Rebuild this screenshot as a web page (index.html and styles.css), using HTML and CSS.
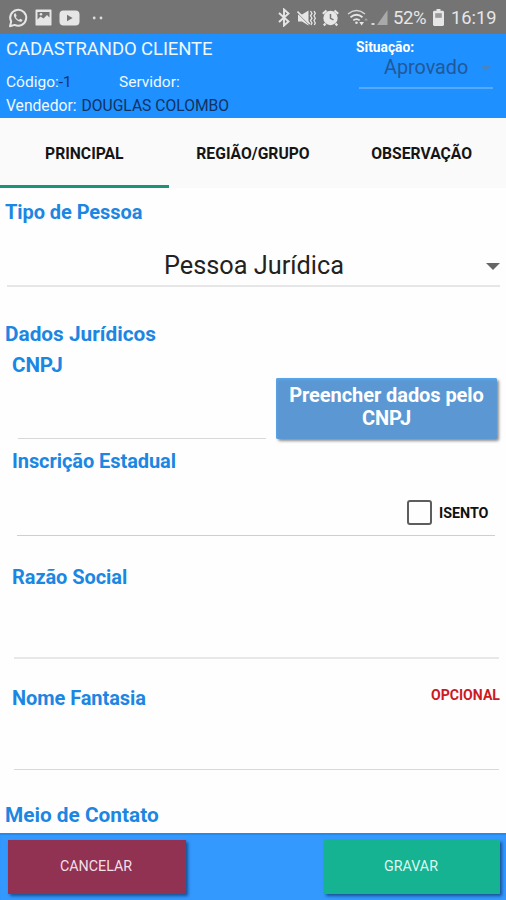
FILE: index.html
```html
<!DOCTYPE html>
<html lang="pt-BR">
<head>
<meta charset="UTF-8" />
<meta name="viewport" content="width=device-width, initial-scale=1" />
<title>Cadastrando Cliente</title>
<link rel="stylesheet" href="styles.css">
</head>
<body>
<div class="status-bar">
  <svg class="icon-whatsapp" width="20" height="20" viewBox="0 0 20 20">
    <path d="M2 18.2 L3.2 13.6 A8 8 0 1 1 6.6 16.9 Z" fill="none" stroke="#e6e6e6" stroke-width="2" stroke-linejoin="round"/>
    <path d="M7 5.2 C5.2 6 5.6 8.6 8.2 11.4 C11 14 13.8 14.4 14.4 12.4 L14.3 11.8 L12.1 10.7 L11 11.9 C9.6 11.4 8.4 10.2 7.8 8.9 L8.7 7.9 L7.8 5.4 Z" fill="#e6e6e6"/>
  </svg>
  <svg class="icon-image" width="17" height="17" viewBox="0 0 17 17">
    <path fill="#e6e6e6" fill-rule="evenodd" d="M1 0.5 H16 L16.5 1 V16 L16 16.5 H1 L.5 16 V1 Z M2.5 3 V10.5 L5.5 7.5 L8.5 9.5 L12 6 L14.5 8.5 V3 Z"/>
    <circle cx="6" cy="5.3" r="1.3" fill="#e6e6e6"/>
  </svg>
  <svg class="icon-youtube" width="21" height="16" viewBox="0 0 21 16">
    <rect x="0.5" y="0.5" width="20" height="15" rx="4" fill="#e6e6e6"/>
    <path d="M8 4.8 L13.6 8 L8 11.2 Z" fill="#747474"/>
  </svg>
  <svg class="icon-dots" width="12" height="4" viewBox="0 0 12 4">
    <circle cx="2.2" cy="2" r="1.4" fill="#dcdcdc"/>
    <circle cx="9" cy="2" r="1.4" fill="#dcdcdc"/>
  </svg>
  <div class="status-right">
    <svg class="icon-bluetooth" width="12" height="19" viewBox="0 0 12 19">
      <path d="M1 5 L10.5 13.5 L6 17.5 V1.5 L10.5 5.5 L1 14" fill="none" stroke="#e6e6e6" stroke-width="1.9"/>
    </svg>
    <svg class="icon-mute" width="19" height="18" viewBox="0 0 19 18">
      <path d="M1 5.5 H5 L11.5 1.5 V16.5 L5 12.5 H1 Z" fill="#e6e6e6"/>
      <path d="M0 3.6 L12 15.6" stroke="#747474" stroke-width="1"/>
      <path d="M0.5 2.5 L13 15" stroke="#e6e6e6" stroke-width="1.6"/>
      <path d="M13.5 2 L15 4.4 L13.5 6.8 L15 9.2 L13.5 11.6 L15 14 L14 16 M17 2 L18.3 4.4 L17 6.8 L18.3 9.2 L17 11.6 L18.3 14 L17.3 16" fill="none" stroke="#e6e6e6" stroke-width="1.3"/>
    </svg>
    <svg class="icon-alarm" width="17" height="18" viewBox="0 0 17 18">
      <circle cx="8.5" cy="9" r="7.2" fill="#e6e6e6"/>
      <path d="M.8 4.8 L4.5 1.5 M16.2 4.8 L12.5 1.5 M3.5 14.5 L1.8 16.5 M13.5 14.5 L15.2 16.5" stroke="#e6e6e6" stroke-width="2.2"/>
      <path d="M8.5 5 V9.3 L11.5 10.8" fill="none" stroke="#747474" stroke-width="1.5"/>
    </svg>
    <svg class="icon-wifi" width="22" height="17" viewBox="0 0 22 17">
      <path d="M1 5 Q9.5 -2 18 5" fill="none" stroke="#d6d6d6" stroke-width="1.6"/>
      <path d="M3.5 8.3 Q9.5 3.3 15.5 8.3" fill="none" stroke="#e6e6e6" stroke-width="1.8"/>
      <path d="M6.3 11.4 Q9.5 8.8 12.7 11.4" fill="none" stroke="#e6e6e6" stroke-width="1.8"/>
      <circle cx="9.5" cy="13.8" r="1.3" fill="#e6e6e6"/>
      <path d="M12.3 13 H17 L14.6 16.5 Z" fill="#e6e6e6"/>
      <path d="M17 11.5 L19 9 L21 11.5 Z" fill="#a0a0a0"/>
    </svg>
    <svg class="icon-signal" width="17" height="17" viewBox="0 0 17 17">
      <path d="M6 16 L16.5 1 V16 Z" fill="#a9a9a9"/>
      <rect x="0.5" y="14" width="3" height="2" fill="#d8d8d8"/>
    </svg>
    <span class="battery-level">52%</span>
    <svg class="icon-battery" width="11" height="17" viewBox="0 0 11 17">
      <path fill="#e6e6e6" d="M3.5 0 H7.5 V1.7 H10 L11 2.7 V16 L10 17 H1 L0 16 V2.7 L1 1.7 H3.5 Z"/>
      <rect x="2.2" y="4.2" width="6.6" height="4.6" fill="#9a9a9a"/>
    </svg>
    <span class="clock">16:19</span>
  </div>
</div>

<header>
  <div class="client">
    <h1><span>CADASTRANDO CLIENTE</span></h1>
    <div class="client-row">
      <span class="codigo">Código:<b>-1</b></span>
      <span class="servidor">Servidor:</span>
    </div>
    <div class="client-row vendedor"><span>Vendedor:</span> <b>DOUGLAS COLOMBO</b></div>
  </div>
  <div class="situacao">
    <label>Situação:</label>
    <div class="situacao-select">
      <span>Aprovado</span>
      <i class="arrow"></i>
    </div>
  </div>
</header>

<nav>
  <div class="tab active"><span>PRINCIPAL</span></div>
  <div class="tab"><span>REGIÃO/GRUPO</span></div>
  <div class="tab"><span>OBSERVAÇÃO</span></div>
</nav>

<main>
  <h2 class="tipo-title"><span>Tipo de Pessoa</span></h2>
  <div class="tipo-select">
    <span>Pessoa Jurídica</span>
    <i class="arrow"></i>
  </div>

  <h2 class="dados-title"><span>Dados Jurídicos</span></h2>
  <h3 class="cnpj-title"><span>CNPJ</span></h3>
  <div class="cnpj-row">
    <div class="line cnpj-line"></div>
    <button class="fill-button"><span>Preencher dados pelo</span><br><span>CNPJ</span></button>
  </div>

  <h3 class="inscricao-title"><span>Inscrição Estadual</span></h3>
  <div class="inscricao-row">
    <div class="checkbox"></div>
    <label class="isento">ISENTO</label>
  </div>

  <h3 class="razao-title"><span>Razão Social</span></h3>
  <div class="line razao-line"></div>

  <div class="nome-row">
    <h3 class="nome-title"><span>Nome Fantasia</span></h3>
    <span class="opcional">OPCIONAL</span>
  </div>
  <div class="line nome-line"></div>

  <h2 class="contato-title"><span>Meio de Contato</span></h2>
</main>

<footer>
  <button class="cancel"><span>CANCELAR</span></button>
  <button class="save"><span>GRAVAR</span></button>
</footer>
</body>
</html>
```
FILE: styles.css
```css
* {
  box-sizing: border-box;
}
body {
  margin: 0;
  width: 506px;
  height: 900px;
  overflow: hidden;
  display: flex;
  flex-direction: column;
  font-family: Roboto, sans-serif;
  background: #fefefe;
}
h1, h2, h3 {
  margin: 0;
  white-space: nowrap;
}
button {
  font-family: inherit;
  border: none;
  padding: 0;
}

.status-bar {
  height: 34px;
  flex: none;
  display: flex;
  align-items: center;
  padding: 1px 10px 0 8px;
  background: #747474;
  color: #e6e6e6;
}
.icon-image {
  margin-left: 7px;
}
.icon-youtube {
  margin-left: 7px;
}
.icon-dots {
  margin-left: 12px;
}
.status-right {
  margin-left: auto;
  display: flex;
  align-items: center;
}
.icon-mute {
  margin-left: 7px;
}
.icon-alarm {
  margin-left: 6px;
}
.icon-wifi {
  margin-left: 8px;
}
.icon-signal {
  margin-left: 2px;
}
.battery-level {
  margin-left: 5px;
  width: 35px;
  font-size: 18.5px;
  letter-spacing: -0.4px;
}
.icon-battery {
  margin-left: 5px;
}
.clock {
  margin-left: 7px;
  width: 45px;
  font-size: 18.3px;
}

header {
  height: 84px;
  flex: none;
  display: flex;
  justify-content: space-between;
  padding: 0 13px 0 6px;
  background: #1e90ff;
  color: #f0f8ff;
}
h1 {
  height: 31px;
  font-size: 18.5px;
  font-weight: 400;
  line-height: 30px;
  letter-spacing: -0.1px;
}
.client-row {
  display: flex;
  height: 24px;
  font-size: 15.5px;
  line-height: 24px;
  padding-top: 5px;
}
.client-row b {
  font-weight: 400;
  color: #12325f;
}
.codigo {
  width: 113px;
}
.vendedor {
  gap: 5px;
  font-size: 15.65px;
}
.situacao {
  width: 137px;
}
.situacao label {
  display: block;
  height: 22px;
  padding-top: 4px;
  font-size: 13.8px;
  font-weight: 700;
  line-height: 18px;
  color: #fff;
}
.situacao-select {
  height: 33px;
  margin-left: 3px;
  display: flex;
  justify-content: space-between;
  padding: 1px 2px 0 25px;
  border-bottom: 2px solid #55aafc;
  font-size: 19.8px;
  line-height: 22px;
  color: #22589a;
}
.arrow {
  width: 0;
  height: 0;
  border-left: 7px solid transparent;
  border-right: 7px solid transparent;
  border-top: 7px solid #666;
}
.situacao-select .arrow {
  margin-top: 9px;
  border-left-width: 5px;
  border-right-width: 5px;
  border-top: 5px solid #4684c4;
}

nav {
  height: 70px;
  flex: none;
  display: grid;
  grid-template-columns: repeat(3, 1fr);
  background: #fafafa;
}
.tab {
  height: 70px;
  text-align: center;
  font-size: 15.7px;
  font-weight: 700;
  line-height: 71px;
  color: #151515;
}
.active {
  border-bottom: 3px solid #1c9277;
}

main {
  flex: 1;
  min-height: 0;
  display: flex;
  flex-direction: column;
}
h2, h3 {
  height: 24px;
  flex: none;
  font-size: 20px;
  font-weight: 700;
  line-height: 24px;
  letter-spacing: -0.07px;
  color: #1c86e3;
}
h2 {
  padding-left: 5px;
}
h3 {
  padding-left: 12px;
}
.line {
  height: 1px;
  flex: none;
  background: #d8d8d8;
}
.tipo-title {
  margin-top: 12px;
}
.tipo-select {
  height: 44px;
  flex: none;
  margin: 19px 6px 0 7px;
  padding-top: 3px;
  display: flex;
  align-items: center;
  border-bottom: 2px solid #e6e6e6;
  font-size: 25.3px;
  color: #222;
}
.tipo-select span {
  flex: 1;
  padding-left: 157px;
}
.tipo-select .arrow {
  margin-top: 2px;
}
.dados-title {
  margin-top: 35px;
  font-size: 20.8px;
  letter-spacing: 0;
}
.cnpj-title {
  margin-top: 7px;
  font-size: 20.6px;
}
.cnpj-row {
  height: 61px;
  flex: none;
  margin: 1px 9px 0 18px;
  display: flex;
  align-items: flex-end;
  justify-content: space-between;
}
.cnpj-line {
  width: 248px;
}
.fill-button {
  width: 221px;
  height: 61px;
  padding-bottom: 3px;
  border-radius: 2px;
  background: #5b98d3;
  box-shadow: 2px 2px 3px rgba(0, 0, 0, 0.45), inset 1px 2px 2px #5aa5ea;
  font-size: 20px;
  font-weight: 700;
  line-height: 23px;
  letter-spacing: -0.07px;
  color: #fff;
}
.inscricao-title {
  margin-top: 10px;
}
.inscricao-row {
  height: 63px;
  flex: none;
  margin: 0 11px 0 17px;
  display: flex;
  justify-content: flex-end;
  padding: 27px 6px 0 0;
  border-bottom: 1px solid #cfcfcf;
}
.checkbox {
  width: 25px;
  height: 25px;
  border: 2px solid #5d5d5d;
  border-radius: 3px;
}
.isento {
  width: 50px;
  margin-left: 7px;
  font-size: 14.3px;
  font-weight: 700;
  line-height: 26px;
  color: #111;
}
.razao-title {
  margin-top: 29px;
}
.razao-line {
  height: 2px;
  margin: 68px 7px 0 14px;
  background: #e8e8e8;
}
.nome-row {
  display: flex;
  justify-content: space-between;
  margin-top: 27px;
  padding-right: 6px;
}
.opcional {
  font-size: 14.1px;
  font-weight: 700;
  line-height: 18px;
  color: #cc1a22;
}
.nome-line {
  margin: 59px 7px 0 14px;
}
.contato-title {
  margin-top: 33px;
  font-size: 20.8px;
  letter-spacing: 0;
}

footer {
  height: 67px;
  flex: none;
  display: flex;
  justify-content: space-between;
  padding: 7px 6px 0 8px;
  background: #3399ff;
  box-shadow: inset 0 2px 1px #2489ee;
}
footer button {
  height: 54px;
  font-size: 14.3px;
  line-height: 50px;
  padding: 0 2px 3px 0;
  box-shadow: 2px 2px 3px rgba(0, 20, 60, 0.55);
}
.cancel {
  width: 178px;
  background: #913252;
  color: #f3dfe7;
}
.save {
  width: 176px;
  background: #15b392;
  color: #dcf8f0;
}
```
